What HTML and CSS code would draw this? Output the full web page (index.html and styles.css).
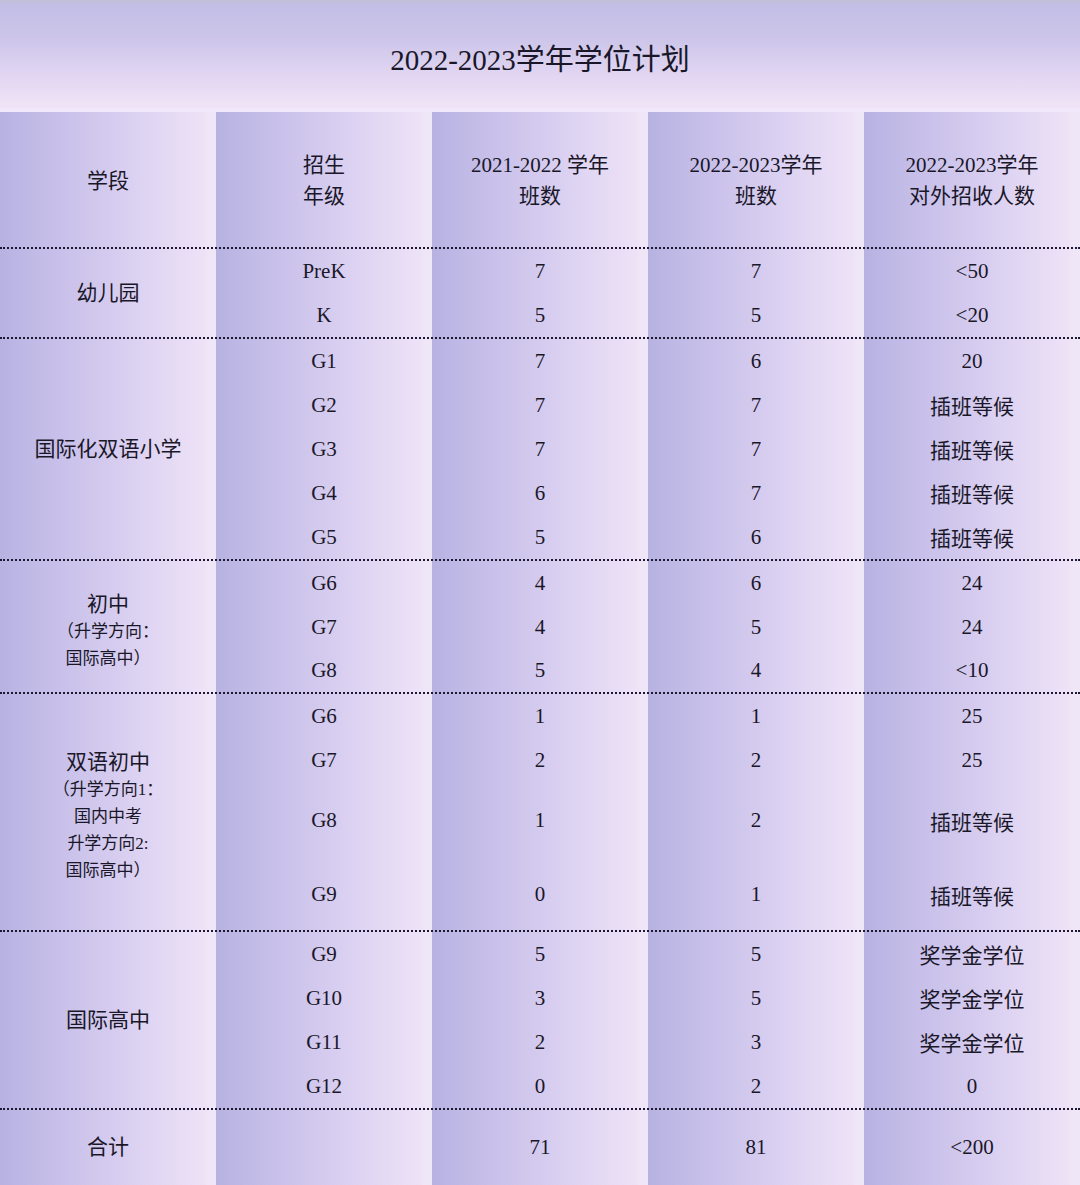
FILE: index.html
```html
<!DOCTYPE html>
<html lang="zh-CN">
<head>
<meta charset="utf-8">
<title>2022-2023学年学位计划</title>
<link rel="stylesheet" href="styles.css">
</head>
<body>
<div class="sheet">
  <header class="title">2022-2023学年学位计划</header>
  <div class="table">
    <div class="head">
      <div class="hc">学段</div>
      <div class="hc">招生<br>年级</div>
      <div class="hc">2021-2022 学年<br>班数</div>
      <div class="hc">2022-2023学年<br>班数</div>
      <div class="hc">2022-2023学年<br>对外招收人数</div>
    </div>

    <section class="group">
      <div class="stage">幼儿园</div>
      <div class="rows">
        <div class="r"><span>PreK</span><span>7</span><span>7</span><span>&lt;50</span></div>
        <div class="r"><span>K</span><span>5</span><span>5</span><span>&lt;20</span></div>
      </div>
    </section>

    <section class="group">
      <div class="stage">国际化双语小学</div>
      <div class="rows">
        <div class="r"><span>G1</span><span>7</span><span>6</span><span>20</span></div>
        <div class="r"><span>G2</span><span>7</span><span>7</span><span>插班等候</span></div>
        <div class="r"><span>G3</span><span>7</span><span>7</span><span>插班等候</span></div>
        <div class="r"><span>G4</span><span>6</span><span>7</span><span>插班等候</span></div>
        <div class="r"><span>G5</span><span>5</span><span>6</span><span>插班等候</span></div>
      </div>
    </section>

    <section class="group">
      <div class="stage stage-sub">初中<small>（升学方向：</small><small>国际高中）</small></div>
      <div class="rows">
        <div class="r"><span>G6</span><span>4</span><span>6</span><span>24</span></div>
        <div class="r"><span>G7</span><span>4</span><span>5</span><span>24</span></div>
        <div class="r r43"><span>G8</span><span>5</span><span>4</span><span>&lt;10</span></div>
      </div>
    </section>

    <section class="group">
      <div class="stage stage-sub">双语初中<small>（升学方向1：</small><small>国内中考</small><small>升学方向2:</small><small>国际高中）</small></div>
      <div class="rows">
        <div class="r"><span>G6</span><span>1</span><span>1</span><span>25</span></div>
        <div class="r"><span>G7</span><span>2</span><span>2</span><span>25</span></div>
        <div class="r r77"><span>G8</span><span>1</span><span>2</span><span>插班等候</span></div>
        <div class="r r71"><span>G9</span><span>0</span><span>1</span><span>插班等候</span></div>
      </div>
    </section>

    <section class="group">
      <div class="stage">国际高中</div>
      <div class="rows">
        <div class="r"><span>G9</span><span>5</span><span>5</span><span>奖学金学位</span></div>
        <div class="r"><span>G10</span><span>3</span><span>5</span><span>奖学金学位</span></div>
        <div class="r"><span>G11</span><span>2</span><span>3</span><span>奖学金学位</span></div>
        <div class="r"><span>G12</span><span>0</span><span>2</span><span>0</span></div>
      </div>
    </section>

    <section class="group total">
      <div class="stage">合计</div>
      <div class="rows">
        <div class="r r75"><span></span><span>71</span><span>81</span><span>&lt;200</span></div>
      </div>
    </section>
  </div>
</div>
</body>
</html>
```

FILE: styles.css
```css
* { box-sizing: border-box; }

html, body {
  margin: 0;
  padding: 0;
  background: #efe6f8;
}

body {
  font-family: "Liberation Serif", "Noto Sans CJK SC", serif;
  color: #1a1729;
}

.sheet {
  width: 1080px;
  height: 1185px;
  overflow: hidden;
  background: #f1e9f9;
}

.title {
  height: 108px;
  border-top: 3px solid #c3bfdb;
  margin-bottom: 4px;
  background: linear-gradient(to bottom, #c2bde5 0%, #cdc6ea 35%, #e2d6f2 70%, #f0e5f7 100%);
  display: flex;
  align-items: center;
  justify-content: center;
  font-size: 29px;
  padding-top: 2px;
}

.table {
  background-image: linear-gradient(to right,
    #b6b2e1 0px,
    #c4bde8 45px,
    #d5cbef 110px,
    #e4d9f4 165px,
    #ede2f6 205px,
    #efe7f8 209px,
    #efe7f8 216px);
  background-size: 216px 100%;
  background-repeat: repeat-x;
}

.head {
  display: grid;
  grid-template-columns: repeat(5, 216px);
  height: 135px;
  font-size: 21px;
  line-height: 31px;
}

.hc {
  display: flex;
  align-items: center;
  justify-content: center;
  text-align: center;
  padding-top: 3px;
}

.group {
  display: grid;
  grid-template-columns: 216px 864px;
  border-top: 2px dotted #1b1830;
}

.stage {
  display: flex;
  flex-direction: column;
  align-items: center;
  justify-content: center;
  font-size: 21px;
  line-height: 27px;
  text-align: center;
}

.stage-sub {
  padding-top: 9px;
}

.stage small {
  font-size: 17px;
  line-height: 27px;
}

.rows {
  display: flex;
  flex-direction: column;
}

.r {
  display: grid;
  grid-template-columns: repeat(4, 216px);
  height: 44px;
  align-items: center;
  text-align: center;
  font-size: 21px;
}

.r43 { height: 43px; }
.r77 { height: 77px; }
.r71 { height: 71px; }
.r75 { height: 75px; }
```
